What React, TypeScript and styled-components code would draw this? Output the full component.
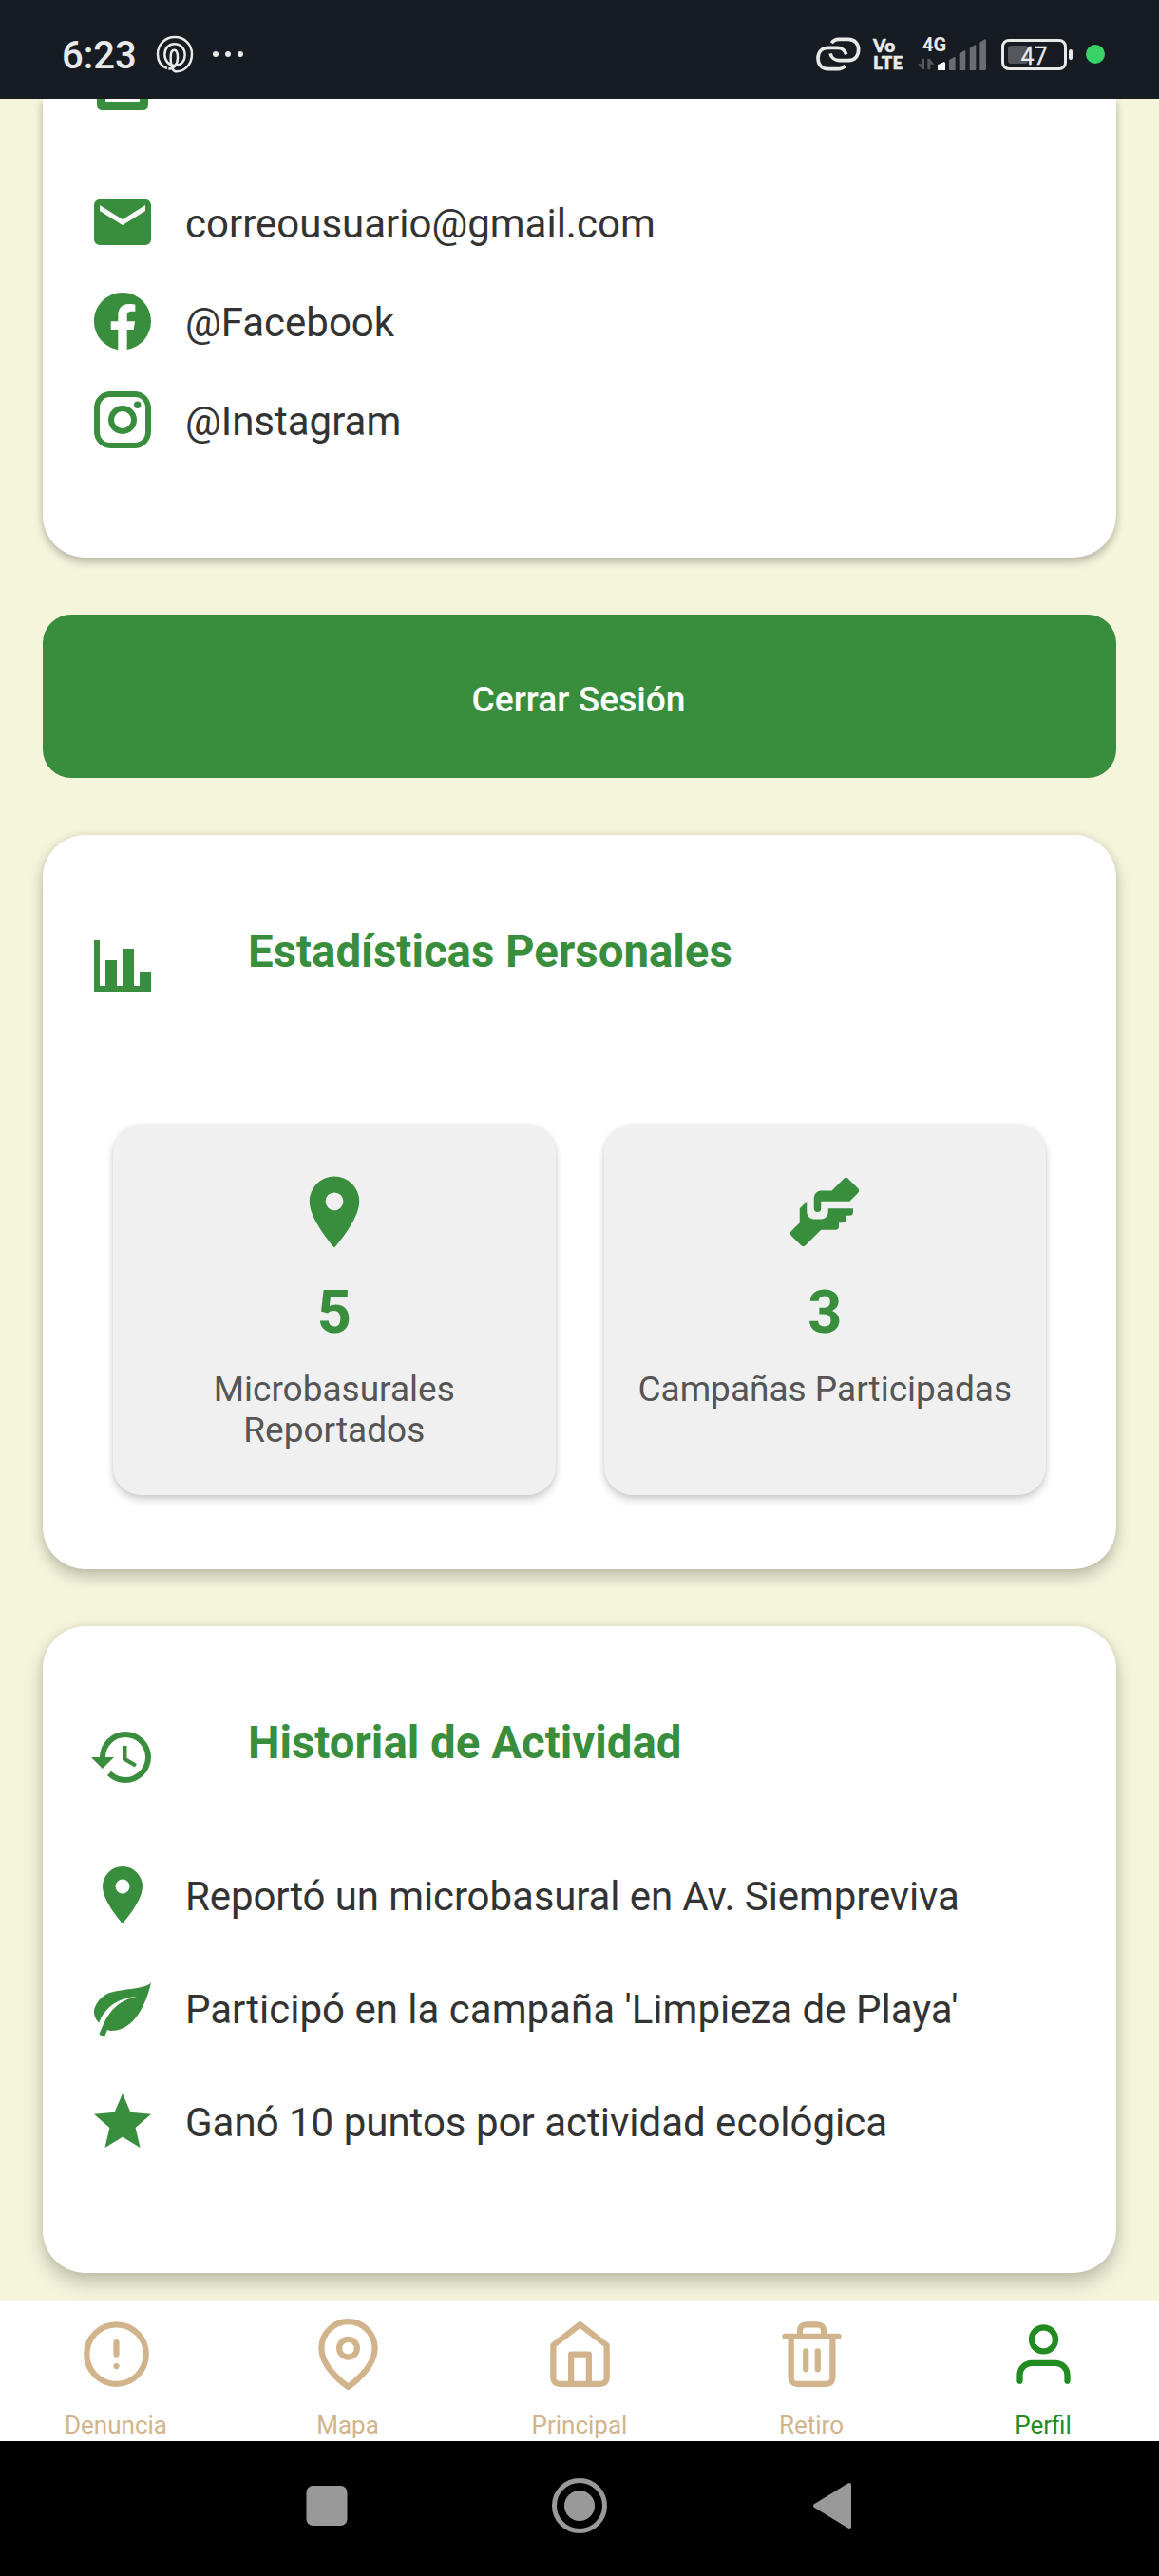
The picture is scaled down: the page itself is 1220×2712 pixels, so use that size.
import React from "react";
import styled, { createGlobalStyle } from "styled-components";

const GREEN = "#388e3c";
const BEIGE = "#f5f5dc";

const GlobalStyle = createGlobalStyle`
  *, *::before, *::after { box-sizing: border-box; }
  body { margin: 0; background: ${BEIGE}; font-family: Roboto, "Noto Sans", sans-serif; }
`;

const Screen = styled.div`
  width: 1220px;
  height: 2712px;
  display: flex;
  flex-direction: column;
  overflow: hidden;
  background: ${BEIGE};
`;

/* ---------- Status bar ---------- */

const StatusBar = styled.header`
  flex: none;
  height: 104px;
  padding: 10px 57px 0 65px;
  display: flex;
  align-items: center;
  background: #171b22;
  color: #e8e9e9;
  svg { display: block; flex: none; }
`;

const Clock = styled.div`
  width: 80px;
  margin-top: 4px;
  font-size: 40px;
  font-weight: 500;
  line-height: 46px;
  white-space: nowrap;
`;

const SpiralSlot = styled.div`
  margin-left: 19px;
`;

const MoreDots = styled.div`
  display: flex;
  gap: 7px;
  margin-left: 20px;
  i { width: 6px; height: 6px; border-radius: 50%; background: currentColor; }
`;

const StatusRight = styled.div`
  margin-left: auto;
  display: flex;
  align-items: center;
`;

const Volte = styled.div`
  width: 37px;
  margin-left: 13px;
  font-family: Lato, Roboto, sans-serif;
  font-size: 19px;
  font-weight: 800;
  line-height: 18px;
  letter-spacing: 0.3px;
  -webkit-text-stroke: 0.3px currentColor;
`;

const Network = styled.div`
  position: relative;
  width: 73px;
  height: 36px;
  margin-left: 10px;
`;

const NetworkLabel = styled.span`
  position: absolute;
  left: 5px;
  top: -2px;
  font-size: 20px;
  font-weight: 700;
  line-height: 20px;
`;

const Battery = styled.div`
  position: relative;
  width: 69px;
  height: 33px;
  margin-left: 15px;
  border: 3px solid #e8e9e9;
  border-radius: 8px;
  display: flex;
  justify-content: center;
  font-size: 25px;
  font-weight: 400;
  line-height: 31px;
  &::before {
    content: "";
    position: absolute;
    left: 4px;
    top: 4px;
    width: 21px;
    height: 19px;
    border-radius: 3px;
    background: #54575c;
  }
  span { position: relative; -webkit-text-stroke: 0.3px currentColor; }
`;

const BatteryNub = styled.div`
  width: 4px;
  height: 11px;
  margin-left: 2px;
  border-radius: 2px;
  background: #e8e9e9;
`;

const PrivacyDot = styled.div`
  width: 20px;
  height: 20px;
  margin-left: 14px;
  border-radius: 50%;
  background: #37d367;
`;

/* ---------- Scrolling content ---------- */

const Content = styled.main`
  flex: 1;
  min-height: 0;
  overflow: hidden;
  padding: 0 45px;
  display: flex;
  flex-direction: column;
  gap: 60px;
`;

const Card = styled.section<{ $height: number; $cut?: boolean; $depth: number }>`
  flex: none;
  height: ${(p) => p.$height}px;
  padding: 0 48px;
  display: flex;
  flex-direction: column;
  background: #fff;
  border-radius: ${(p) => (p.$cut ? "0 0 45px 45px" : "45px")};
  box-shadow:
    0 ${(p) => p.$depth}px ${(p) => p.$depth * 2}px rgba(0, 0, 0, 0.22),
    0 0 8px rgba(0, 0, 0, 0.08);
`;

const CutIcon = styled.div`
  height: 94px;
  padding-left: 9px;
  svg { display: block; }
`;

const CardHeader = styled.div<{ $height: number }>`
  flex: none;
  height: ${(p) => p.$height}px;
  padding-top: 95px;
  display: flex;
  align-items: flex-start;
`;

const HeaderIcon = styled.div`
  width: 168px;
  padding-top: 7px;
  svg { display: block; }
`;

const Title = styled.h2`
  margin: 0;
  font-size: 47.4px;
  font-weight: 700;
  line-height: 56px;
  color: ${GREEN};
  white-space: nowrap;
`;

const Rows = styled.div<{ $gap: number; $offset?: number }>`
  display: flex;
  flex-direction: column;
  gap: ${(p) => p.$gap}px;
  padding-top: ${(p) => p.$offset ?? 0}px;
`;

const Row = styled.div`
  height: 72px;
  display: flex;
  align-items: center;
  gap: 30px;
  svg { display: block; flex: none; }
`;

const RowText = styled.span<{ $tight?: boolean }>`
  padding-top: 3px;
  font-size: 42px;
  line-height: 50px;
  letter-spacing: ${(p) => (p.$tight ? "-0.11px" : "normal")};
  color: #333;
  white-space: nowrap;
`;

const LogoutButton = styled.button`
  flex: none;
  height: 172px;
  padding: 5px 2px 0 0;
  border: 0;
  border-radius: 30px;
  background: ${GREEN};
  color: #fff;
  font: 500 37.2px/44px Roboto, sans-serif;
`;

const Stats = styled.div`
  display: grid;
  grid-template-columns: 1fr 1fr;
  gap: 51px;
  height: 390px;
  margin: 0 26px;
`;

const Stat = styled.div`
  padding: 47px 20px 0;
  display: flex;
  flex-direction: column;
  align-items: center;
  border-radius: 30px;
  background: #f0f0f0;
  box-shadow: 0 5px 9px rgba(0, 0, 0, 0.18), 0 0 5px rgba(0, 0, 0, 0.07);
  svg { display: block; flex: none; }
`;

const StatValue = styled.div`
  margin-top: 25px;
  font-size: 63px;
  font-weight: 700;
  line-height: 71px;
  color: ${GREEN};
`;

const StatLabel = styled.div`
  margin-top: 24px;
  font-size: 37px;
  line-height: 43px;
  text-align: center;
  color: #555;
`;

/* ---------- Tab bar and system navigation ---------- */

const TabBar = styled.nav`
  position: relative;
  flex: none;
  height: 147px;
  display: grid;
  grid-template-columns: repeat(5, 1fr);
  background: #fff;
  box-shadow: 0 -1px 0 #e4e4d8;
`;

const Tab = styled.div<{ $active?: boolean }>`
  padding-top: 18px;
  display: flex;
  flex-direction: column;
  align-items: center;
  color: ${(p) => (p.$active ? "#228b22" : "#d2b48c")};
  font-size: 26px;
  line-height: 30px;
  svg { display: block; margin-bottom: 22px; }
`;

const SystemNav = styled.footer`
  flex: none;
  height: 142px;
  padding-bottom: 6px;
  display: flex;
  align-items: center;
  justify-content: center;
  gap: 206px;
  background: #000;
  svg { display: block; }
`;

/* ---------- Icons ---------- */

const icons = {
  email:
    "M20,8L12,13L4,8V6L12,11L20,6M20,4H4C2.89,4 2,4.89 2,6V18A2,2 0 0,0 4,20H20A2,2 0 0,0 22,18V6C22,4.89 21.1,4 20,4Z",
  facebook:
    "M12 2.04C6.5 2.04 2 6.53 2 12.06C2 17.06 5.66 21.21 10.44 21.96V14.96H7.9V12.06H10.44V9.85C10.44 7.34 11.93 5.96 14.22 5.96C15.31 5.96 16.45 6.15 16.45 6.15V8.62H15.19C13.95 8.62 13.56 9.39 13.56 10.18V12.06H16.34L15.89 14.96H13.56V21.96A10 10 0 0 0 22 12.06C22 6.53 17.5 2.04 12 2.04Z",
  instagram:
    "M7.8,2H16.2C19.4,2 22,4.6 22,7.8V16.2A5.8,5.8 0 0,1 16.2,22H7.8C4.6,22 2,19.4 2,16.2V7.8A5.8,5.8 0 0,1 7.8,2M7.6,4A3.6,3.6 0 0,0 4,7.6V16.4C4,18.39 5.61,20 7.6,20H16.4A3.6,3.6 0 0,0 20,16.4V7.6C20,5.61 18.39,4 16.4,4H7.6M17.25,5.5A1.25,1.25 0 0,1 18.5,6.75A1.25,1.25 0 0,1 17.25,8A1.25,1.25 0 0,1 16,6.75A1.25,1.25 0 0,1 17.25,5.5M12,7A5,5 0 0,1 17,12A5,5 0 0,1 12,17A5,5 0 0,1 7,12A5,5 0 0,1 12,7M12,9A3,3 0 0,0 9,12A3,3 0 0,0 12,15A3,3 0 0,0 15,12A3,3 0 0,0 12,9Z",
  chart: "M22,21H2V3H4V19H6V10H10V19H12V6H16V19H18V14H22V21Z",
  history:
    "M13.5,8H12V13L16.28,15.54L17,14.33L13.5,12.25V8M13,3A9,9 0 0,0 4,12H1L4.96,16.03L9,12H6A7,7 0 0,1 13,5A7,7 0 0,1 20,12A7,7 0 0,1 13,19C11.07,19 9.32,18.21 8.06,16.94L6.64,18.36C8.27,20 10.5,21 13,21A9,9 0 0,0 22,12A9,9 0 0,0 13,3",
  marker:
    "M12,11.5A2.5,2.5 0 0,1 9.5,9A2.5,2.5 0 0,1 12,6.5A2.5,2.5 0 0,1 14.5,9A2.5,2.5 0 0,1 12,11.5M12,2A7,7 0 0,0 5,9C5,14.25 12,22 12,22C12,22 19,14.25 19,9A7,7 0 0,0 12,2Z",
  leaf: "M17,8C8,10 5.9,16.17 3.82,21.34L5.71,22L6.66,19.7C7.14,19.87 7.64,20 8,20C19,20 22,3 22,3C21,5 14,5.25 9,6.25C4,7.25 2,11.5 2,13.5C2,15.5 3.75,17.25 3.75,17.25C7,8 17,8 17,8Z",
  star: "M12,17.27L18.18,21L16.54,13.97L22,9.24L14.81,8.62L12,2L9.19,8.62L2,9.24L7.45,13.97L5.82,21L12,17.27Z",
  handshake:
    "M11 6H14L17.29 2.7A1 1 0 0 1 18.71 2.7L21.29 5.29A1 1 0 0 1 21.29 6.7L19 9H11V11A1 1 0 0 1 10 12A1 1 0 0 1 9 11V8A2 2 0 0 1 11 6M5 11V15L2.71 17.29A1 1 0 0 0 2.71 18.71L5.29 21.29A1 1 0 0 0 6.71 21.29L11 17H15A1 1 0 0 0 16 16V15H17A1 1 0 0 0 18 14V13H19A1 1 0 0 0 20 12V11H13V12A2 2 0 0 1 11 14H9A2 2 0 0 1 7 12V9Z",
};

const Icon = ({ name, size = 72 }: { name: keyof typeof icons; size?: number }) => (
  <svg width={size} height={size} viewBox="0 0 24 24" fill={GREEN}>
    <path d={icons[name]} />
  </svg>
);

const LineIcon = ({ children }: { children: React.ReactNode }) => (
  <svg
    width="75"
    height="75"
    viewBox="0 0 24 24"
    fill="none"
    stroke="currentColor"
    strokeWidth="2"
    strokeLinecap="round"
    strokeLinejoin="round"
  >
    {children}
  </svg>
);

const SpiralIcon = () => (
  <svg width="40" height="40" viewBox="494 109 120 120" fill="none" stroke="currentColor" strokeWidth="7.5">
    <path d="M554 205C535 205 522 190 522 170C522 150 535 137 553 137C574 137 586 153 586 172C586 190 574 204 558 204" />
    <path d="M530 214C508 206 500 188 500 169C500 138 524 115 554 115C584 115 608 138 608 169C608 200 586 224 560 224C546 224 541 206 541 180C541 164 545 156 552 156C560 156 563 166 563 180C563 200 552 217 534 215" />
  </svg>
);

const LinkIcon = () => (
  <svg width="47" height="36" viewBox="118 115 141 108" fill="none" stroke="currentColor" strokeWidth="11">
    <path d="M167 134C172 126 180 122 190 122H220C240 122 252 136 252 155C252 175 240 189 220 189H192C178 189 166 180 163 167" />
    <path d="M213 170C210 158 199 149 186 149H157C136 149 124 163 124 182C124 202 136 216 157 216H187C197 216 205 212 210 205" />
  </svg>
);

const SignalIcon = () => (
  <svg width="73" height="36" viewBox="438 115 219 108">
    <g fill="#55585d">
      <path d="M450 183H459V218H453L438 200H450Z" />
      <path d="M469 183H476L490 201H478V218H469Z" />
    </g>
    <path d="M501 220V203L520 194Q525 193 525 198V220Z" fill="#fff" />
    <g fill="#696c70">
      <path d="M537 220V188L553 178Q557 177 557 181V217Q557 220 554 220Z" />
      <path d="M569 220V168L585 158Q589 157 589 161V217Q589 220 586 220Z" />
      <path d="M602 220V150L618 140Q622 139 622 143V217Q622 220 619 220Z" />
      <path d="M634 220V132L650 122Q654 121 654 125V217Q654 220 651 220Z" />
    </g>
  </svg>
);

const contacts: { icon: keyof typeof icons; text: string }[] = [
  { icon: "email", text: "correousuario@gmail.com" },
  { icon: "facebook", text: "@Facebook" },
  { icon: "instagram", text: "@Instagram" },
];

const activity: { icon: keyof typeof icons; text: string; tight?: boolean }[] = [
  { icon: "marker", text: "Reportó un microbasural en Av. Siempreviva", tight: true },
  { icon: "leaf", text: "Participó en la campaña 'Limpieza de Playa'" },
  { icon: "star", text: "Ganó 10 puntos por actividad ecológica" },
];

export default function App() {
  return (
    <Screen>
      <GlobalStyle />
      <StatusBar>
        <Clock>6:23</Clock>
        <SpiralSlot>
          <SpiralIcon />
        </SpiralSlot>
        <MoreDots>
          <i />
          <i />
          <i />
        </MoreDots>
        <StatusRight>
          <LinkIcon />
          <Volte>
            Vo
            <br />
            LTE
          </Volte>
          <Network>
            <SignalIcon />
            <NetworkLabel>4G</NetworkLabel>
          </Network>
          <Battery>
            <span>47</span>
          </Battery>
          <BatteryNub />
          <PrivacyDot />
        </StatusRight>
      </StatusBar>

      <Content>
        <Card $height={483} $cut $depth={5}>
          <CutIcon>
            <svg width="54" height="12" viewBox="0 0 54 12" fill={GREEN}>
              <path d="M0 0H9V3H45V0H54V6Q54 12 48 12H6Q0 12 0 6Z" />
            </svg>
          </CutIcon>
          <Rows $gap={32}>
            {contacts.map((c) => (
              <Row key={c.text}>
                <Icon name={c.icon} />
                <RowText>{c.text}</RowText>
              </Row>
            ))}
          </Rows>
        </Card>

        <LogoutButton>Cerrar Sesión</LogoutButton>

        <Card $height={773} $depth={8}>
          <CardHeader $height={305}>
            <HeaderIcon>
              <Icon name="chart" />
            </HeaderIcon>
            <Title>Estadísticas Personales</Title>
          </CardHeader>
          <Stats>
            <Stat>
              <Icon name="marker" size={90} />
              <StatValue>5</StatValue>
              <StatLabel>Microbasurales Reportados</StatLabel>
            </Stat>
            <Stat>
              <Icon name="handshake" size={90} />
              <StatValue>3</StatValue>
              <StatLabel>Campañas Participadas</StatLabel>
            </Stat>
          </Stats>
        </Card>

        <Card $height={681} $depth={10}>
          <CardHeader $height={223}>
            <HeaderIcon>
              <Icon name="history" />
            </HeaderIcon>
            <Title>Historial de Actividad</Title>
          </CardHeader>
          <Rows $gap={47.3} $offset={24}>
            {activity.map((a) => (
              <Row key={a.text}>
                <Icon name={a.icon} />
                <RowText $tight={a.tight}>{a.text}</RowText>
              </Row>
            ))}
          </Rows>
        </Card>
      </Content>

      <TabBar>
        <Tab>
          <LineIcon>
            <circle cx="12" cy="12" r="10" />
            <path d="M12 8v4M12 16h.01" />
          </LineIcon>
          Denuncia
        </Tab>
        <Tab>
          <LineIcon>
            <path d="M21 10c0 7-9 13-9 13s-9-6-9-13a9 9 0 0 1 18 0z" />
            <circle cx="12" cy="10" r="3" />
          </LineIcon>
          Mapa
        </Tab>
        <Tab>
          <LineIcon>
            <path d="M3 9l9-7 9 7v11a2 2 0 0 1-2 2H5a2 2 0 0 1-2-2z" />
            <path d="M9 22V12h6v10" />
          </LineIcon>
          Principal
        </Tab>
        <Tab>
          <LineIcon>
            <path d="M3 6h18M19 6v14a2 2 0 0 1-2 2H7a2 2 0 0 1-2-2V6m3 0V4a2 2 0 0 1 2-2h4a2 2 0 0 1 2 2v2M10 11v6M14 11v6" />
          </LineIcon>
          Retiro
        </Tab>
        <Tab $active>
          <LineIcon>
            <path d="M20 21v-2a4 4 0 0 0-4-4H8a4 4 0 0 0-4 4v2" />
            <circle cx="12" cy="7" r="4" />
          </LineIcon>
          Perfil
        </Tab>
      </TabBar>

      <SystemNav>
        <svg width="60" height="60" viewBox="0 0 60 60" fill="#999">
          <rect x="8.5" y="9" width="43" height="42" rx="7" />
        </svg>
        <svg width="60" height="60" viewBox="0 0 60 60">
          <circle cx="30" cy="30" r="26.5" fill="none" stroke="#999" strokeWidth="5" />
          <circle cx="30" cy="30" r="16" fill="#999" />
        </svg>
        <svg width="60" height="60" viewBox="0 0 60 60" fill="#999" stroke="#999" strokeWidth="4" strokeLinejoin="round">
          <path d="M12 30L48 8V52Z" />
        </svg>
      </SystemNav>
    </Screen>
  );
}
